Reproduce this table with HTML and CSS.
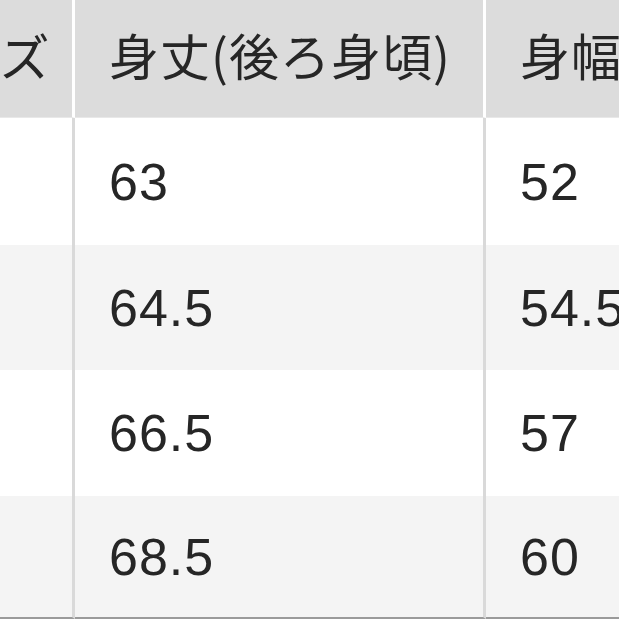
FILE: index.html
```html
<!DOCTYPE html>
<html lang="ja">
<head>
<meta charset="utf-8">
<link rel="stylesheet" href="styles.css">
</head>
<body>
<div class="viewport">
  <div class="table">
    <div class="cell head">サイズ</div>
    <div class="cell head">身丈(後ろ身頃)</div>
    <div class="cell head">身幅</div>

    <div class="cell">S</div>
    <div class="cell num">63</div>
    <div class="cell num">52</div>

    <div class="cell alt">M</div>
    <div class="cell alt num">64.5</div>
    <div class="cell alt num">54.5</div>

    <div class="cell">L</div>
    <div class="cell num">66.5</div>
    <div class="cell num">57</div>

    <div class="cell alt last">XL</div>
    <div class="cell alt num last">68.5</div>
    <div class="cell alt num last">60</div>
  </div>
</div>
</body>
</html>
```

FILE: styles.css
```css
html, body {
  margin: 0;
  padding: 0;
  background: #ffffff;
}
.viewport {
  width: 619px;
  height: 619px;
  overflow: hidden;
}
.table {
  display: grid;
  grid-template-columns: 210px 411px 300px;
  grid-template-rows: 118px 127px 125px 126px 123px;
  margin-left: -135px;
  width: max-content;
  font-family: "Liberation Sans", "Noto Sans CJK JP", sans-serif;
  color: #262626;
  font-size: 52px;
}
.cell {
  display: flex;
  align-items: center;
  padding-left: 34px;
  border-right: 3px solid #d9d9d9;
  background: #ffffff;
  white-space: nowrap;
  box-sizing: border-box;
}
.cell.head {
  background: #dcdcdc;
  border-right: 3px solid #ffffff;
  border-bottom: 1px solid #e8e8e8;
  font-family: "Noto Sans CJK JP", sans-serif;
  font-size: 50px;
  font-weight: 400;
  letter-spacing: 1px;
  padding-bottom: 10px;
}
.cell.alt {
  background: #f4f4f4;
}
.cell.last {
  border-bottom: 2px solid #9a9a9a;
}
.num {
  letter-spacing: 1px;
}
```
